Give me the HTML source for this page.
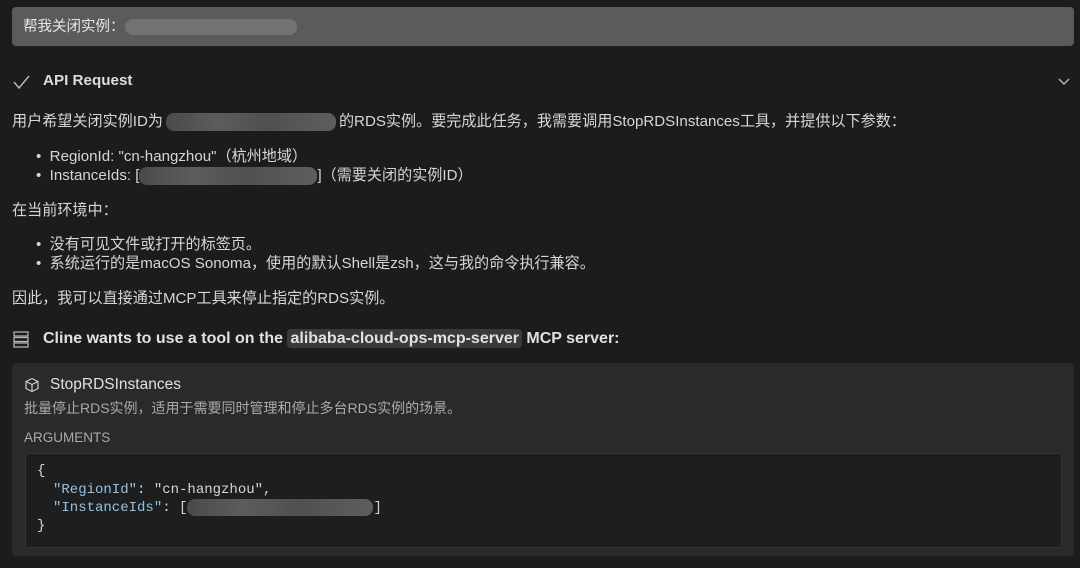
<!DOCTYPE html>
<html><head><meta charset="utf-8"><style>
*{margin:0;padding:0;box-sizing:border-box}
body{width:1080px;height:568px;background:#1c1c1c;color:#d6d6d6;font-family:"Liberation Sans","Noto Sans CJK SC",sans-serif;font-size:15.1px;position:relative;overflow:hidden}
.a{position:absolute;white-space:nowrap;line-height:18px}
.blur{display:inline-block;vertical-align:middle;background:linear-gradient(90deg,#4a4a4a,#5c5c5c 30%,#505050 60%,#5e5e5e);border-radius:8px;height:18px}
.mono{font-family:"Liberation Mono","DejaVu Sans Mono",monospace;font-size:14px}
.k{color:#8fc4e8}
</style></head><body>
<div style="position:absolute;left:12px;top:7px;width:1062px;height:39px;background:#5b5b5b;border-radius:4px"></div>
<div class="a" style="left:23px;top:18px;color:#e6e6e6;font-size:14.5px">帮我关闭实例：<span class="blur" style="width:172px;height:16px;background:#727272"></span></div>

<svg class="a" style="left:12px;top:72px" width="20" height="20" viewBox="0 0 20 20"><path d="M2 10 L7 16 L17 4" fill="none" stroke="#bbb" stroke-width="1.4"/></svg>
<div class="a" style="left:43px;top:72px;font-weight:bold;color:#ddd;font-size:15.2px">API Request</div>
<svg class="a" style="left:1057px;top:74px" width="14" height="14" viewBox="0 0 14 14"><path d="M2 5 L7 10 L12 5" fill="none" stroke="#bbb" stroke-width="1.4"/></svg>

<div class="a" style="left:12px;top:113px">用户希望关闭实例ID为<span class="blur" style="width:170px;margin:0 3px"></span>的RDS实例。要完成此任务，我需要调用StopRDSInstances工具，并提供以下参数：</div>
<div class="a" style="left:36px;top:148px">•&nbsp; RegionId: "cn-hangzhou"（杭州地域）</div>
<div class="a" style="left:36px;top:167px">•&nbsp; InstanceIds: [<span class="blur" style="width:178px"></span>]（需要关闭的实例ID）</div>
<div class="a" style="left:12px;top:202px">在当前环境中：</div>
<div class="a" style="left:36px;top:236px">•&nbsp; 没有可见文件或打开的标签页。</div>
<div class="a" style="left:36px;top:255px">•&nbsp; 系统运行的是macOS Sonoma，使用的默认Shell是zsh，这与我的命令执行兼容。</div>
<div class="a" style="left:12px;top:290px">因此，我可以直接通过MCP工具来停止指定的RDS实例。</div>

<svg class="a" style="left:13px;top:331px" width="16" height="17" viewBox="0 0 16 17"><g fill="none" stroke="#bbb" stroke-width="1.2"><rect x="1" y="1" width="14" height="4"/><rect x="1" y="6.5" width="14" height="4"/><rect x="1" y="12" width="14" height="4"/></g></svg>
<div class="a" style="left:43px;top:330px;font-weight:bold;color:#e0e0e0;font-size:16px">Cline wants to use a tool on the <span style="background:#3a3a3a;border-radius:4px;padding:1px 3px">alibaba-cloud-ops-mcp-server</span> MCP server:</div>

<div style="position:absolute;left:12px;top:363px;width:1062px;height:193px;background:#2a2a2a;border-radius:4px"></div>
<svg class="a" style="left:24px;top:377px" width="16" height="16" viewBox="0 0 16 16"><g fill="none" stroke="#ccc" stroke-width="1.2" stroke-linejoin="round"><path d="M8 1.5 L14 4.5 V11.5 L8 14.5 L2 11.5 V4.5 Z"/><path d="M2 4.5 L8 7.5 L14 4.5 M8 7.5 V14.5"/></g></svg>
<div class="a" style="left:50px;top:376px;color:#e0e0e0;font-size:15.5px">StopRDSInstances</div>
<div class="a" style="left:24px;top:399px;color:#aaa;font-size:14px">批量停止RDS实例，适用于需要同时管理和停止多台RDS实例的场景。</div>
<div class="a" style="left:24px;top:429px;color:#aaa;font-size:13.5px">ARGUMENTS</div>
<div style="position:absolute;left:25px;top:453px;width:1037px;height:95px;background:#1e1e1e;border:1px solid #363636;border-radius:3px"></div>
<div class="a mono" style="left:37px;top:462px">{</div>
<div class="a mono" style="left:53px;top:481px"><span class="k">"RegionId"</span>: "cn-hangzhou",</div>
<div class="a mono" style="left:53px;top:499px"><span class="k">"InstanceIds"</span>: [<span class="blur" style="width:186px;height:17px"></span>]</div>
<div class="a mono" style="left:37px;top:517px">}</div>
</body></html>
